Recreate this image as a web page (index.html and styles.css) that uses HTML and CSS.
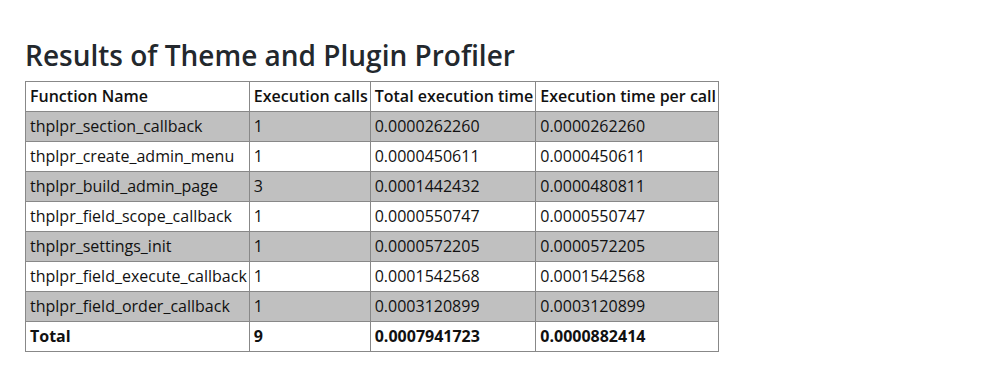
FILE: index.html
```html
<!DOCTYPE html>
<html lang="en">
<head>
    <meta charset="UTF-8">
    <meta name="viewport" content="width=device-width, initial-scale=1.0">
    <title>Theme and Plugin Profiler</title>
    <link rel="stylesheet" href="styles.css">
</head>
<body>
    <div class="wrap">
        <h1>Results of Theme and Plugin Profiler</h1>
        <table class="results">
            <thead>
                <tr>
                    <th>Function Name</th>
                    <th>Execution calls</th>
                    <th>Total execution time</th>
                    <th>Execution time per call</th>
                </tr>
            </thead>
            <tbody>
                <tr class="odd"><td>thplpr_section_callback</td><td>1</td><td>0.0000262260</td><td>0.0000262260</td></tr>
                <tr><td>thplpr_create_admin_menu</td><td>1</td><td>0.0000450611</td><td>0.0000450611</td></tr>
                <tr class="odd"><td>thplpr_build_admin_page</td><td>3</td><td>0.0001442432</td><td>0.0000480811</td></tr>
                <tr><td>thplpr_field_scope_callback</td><td>1</td><td>0.0000550747</td><td>0.0000550747</td></tr>
                <tr class="odd"><td>thplpr_settings_init</td><td>1</td><td>0.0000572205</td><td>0.0000572205</td></tr>
                <tr><td>thplpr_field_execute_callback</td><td>1</td><td>0.0001542568</td><td>0.0001542568</td></tr>
                <tr class="odd"><td>thplpr_field_order_callback</td><td>1</td><td>0.0003120899</td><td>0.0003120899</td></tr>
            </tbody>
            <tfoot>
                <tr><th>Total</th><th>9</th><th>0.0007941723</th><th>0.0000882414</th></tr>
            </tfoot>
        </table>
    </div>
</body>
</html>
```

FILE: styles.css
```css
body {
    margin: 0;
    background: #fff;
    color: #111;
    font-family: 'Open Sans', Arial, sans-serif;
}
.wrap {
    padding: 35px 25px 20px;
}
h1 {
    margin: 0 0 6px;
    font-size: 28px;
    font-weight: 600;
    line-height: 40px;
    color: #23282d;
}
.results {
    border-collapse: collapse;
    font-size: 16px;
    line-height: 21px;
}
.results th,
.results td {
    border: 1px solid #888;
    padding: 4px 2px 4px 4px;
    text-align: left;
    white-space: nowrap;
}
.results th {
    font-weight: 600;
}
.results tfoot th {
    font-weight: 700;
}
.results tr.odd td {
    background-color: #c0c0c0;
}
```
